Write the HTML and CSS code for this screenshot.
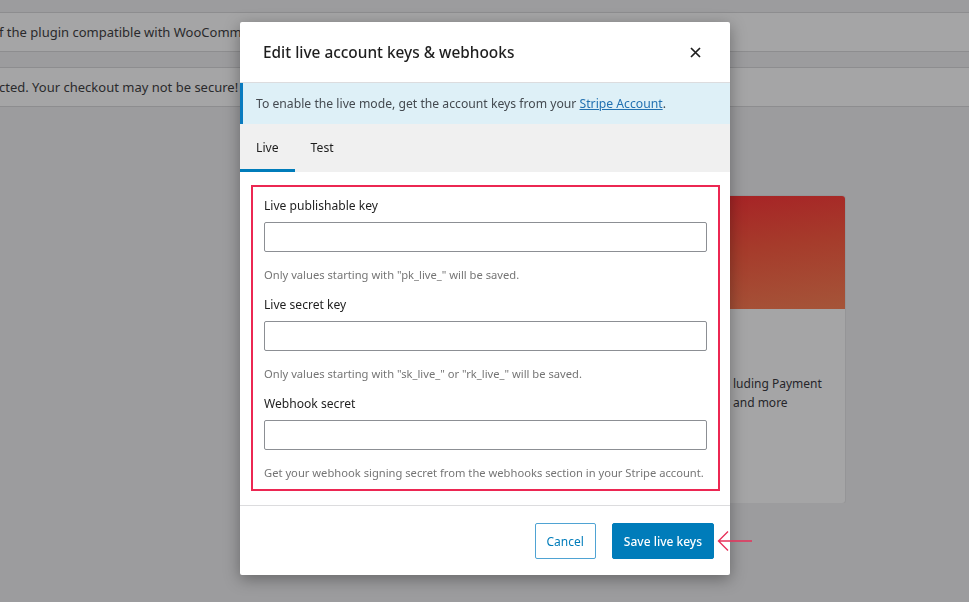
FILE: index.html
```html
<!DOCTYPE html>
<html lang="en">
  <head>
    <meta charset="UTF-8" />
    <meta name="viewport" content="width=device-width, initial-scale=1.0" />
    <title>Stripe settings</title>
    <link rel="stylesheet" href="styles.css">
  </head>
  <body>
    <!-- admin page behind the overlay -->
    <div class="page">
      <div class="notice">f the plugin compatible with WooCommerce to keep your store running smoothly.</div>
      <div class="notice">cted. Your checkout may not be secure! Please enable SSL to accept payments.</div>

      <div class="cards">
        <div class="card">
          <div class="card-image"></div>
          <div class="card-body">
            <p>luding Payment<br />and more</p>
          </div>
        </div>
      </div>
    </div>

    <!-- modal -->
    <div class="modal">
      <div class="modal-header">
        <h1>Edit live account keys &amp; webhooks</h1>
        <button class="close" aria-label="Close">
          <svg width="11" height="11" viewBox="0 0 11 11">
            <path d="M1 1L10 10M10 1L1 10" stroke="#1e1e1e" stroke-width="1.7" fill="none" />
          </svg>
        </button>
      </div>

      <div class="info">
        To enable the live mode, get the account keys from your <a href="#">Stripe Account</a>.
      </div>

      <div class="tabs">
        <div class="tab active">Live</div>
        <div class="tab">Test</div>
      </div>

      <div class="modal-content">
        <div class="fields">
          <div class="field">
            <label for="pubKey">Live publishable key</label>
            <input type="text" id="pubKey" />
            <p class="help">Only values starting with "pk_live_" will be saved.</p>
          </div>
          <div class="field">
            <label for="secretKey">Live secret key</label>
            <input type="text" id="secretKey" />
            <p class="help">Only values starting with "sk_live_" or "rk_live_" will be saved.</p>
          </div>
          <div class="field">
            <label for="webhookSecret">Webhook secret</label>
            <input type="text" id="webhookSecret" />
            <p class="help">Get your webhook signing secret from the webhooks section in your Stripe account.</p>
          </div>
        </div>
      </div>

      <div class="modal-footer">
        <button class="btn secondary">Cancel</button>
        <button class="btn primary">Save live keys</button>
      </div>
    </div>

    <!-- annotation arrow -->
    <svg class="arrow" width="36" height="22" viewBox="0 0 36 22">
      <path d="M35 11H2M11 1.5L1.5 11L11 20.5" stroke="#e8315a" stroke-width="1.4" fill="none" />
    </svg>
  </body>
</html>
```

FILE: styles.css
```css
body {
  margin: 0;
  font-family: "Noto Sans", "Open Sans", sans-serif;
  background-color: #9c9c9e;
  color: #1e1e1e;
  overflow: hidden;
}

.page {
  padding-top: 12px;
}

.notice {
  height: 38px;
  line-height: 38px;
  background: #a5a5a6;
  border-top: 1px solid #8d8d8f;
  border-bottom: 1px solid #8d8d8f;
  margin-bottom: 15px;
  font-size: 13px;
  color: #2a2a2c;
  white-space: nowrap;
  text-indent: -1px;
}

.cards {
  margin-top: 89px;
  padding-left: 600px;
}

.card {
  width: 245px;
  height: 307px;
  background: #a5a5a6;
  border-radius: 3px;
  overflow: hidden;
  box-shadow: 0 0 0 1px rgba(0, 0, 0, 0.04);
}

.card-image {
  height: 113px;
  background: linear-gradient(172deg, #a71c24 0%, #a63b2b 50%, #a55539 100%);
}

.card-body {
  padding: 65px 0 0 133px;
}

.card-body p {
  margin: 0;
  font-size: 12px;
  line-height: 19px;
  color: #26262a;
  white-space: nowrap;
}

/* modal */

.modal {
  position: fixed;
  top: 22px;
  left: 240px;
  width: 490px;
  background: #fff;
  border-radius: 2px;
  box-shadow: 0 4px 16px rgba(0, 0, 0, 0.35);
}

.modal-header {
  height: 60px;
  display: flex;
  align-items: center;
  justify-content: space-between;
  padding: 0 29px 0 23px;
  border-bottom: 1px solid #dcdcde;
}

.modal-header h1 {
  margin: 0;
  font-size: 15.4px;
  font-weight: 500;
  color: #1e1e1e;
}

.close {
  border: none;
  background: none;
  padding: 0;
  margin: 0;
  width: 11px;
  height: 11px;
  display: flex;
  cursor: pointer;
}

.info {
  height: 41px;
  box-sizing: border-box;
  background: #def0f7;
  border-left: 3px solid #0a7bbf;
  padding-left: 13px;
  line-height: 41px;
  font-size: 12.2px;
  color: #444a50;
}

.info a {
  color: #2271b1;
}

.tabs {
  display: flex;
  height: 48px;
  background: #f0f0f0;
}

.tab {
  padding: 0 16px;
  line-height: 48px;
  font-size: 12.2px;
  color: #1e1e1e;
  box-sizing: border-box;
}

.tab.active {
  border-bottom: 3px solid #007cba;
}

.modal-content {
  padding: 13px 10px 14px 11px;
  border-bottom: 1px solid #dcdcde;
}

.fields {
  border: 2px solid #ec2752;
  padding: 10px 11px 8px 11px;
}

.field label {
  display: block;
  font-size: 12.1px;
  line-height: 18px;
  margin-bottom: 7px;
  color: #1e1e1e;
}

.field input {
  display: block;
  width: 100%;
  box-sizing: border-box;
  height: 30px;
  border: 1px solid #8c8f94;
  border-radius: 2px;
  font-size: 13px;
}

.help {
  margin: 15px 0 13px 0;
  font-size: 11.2px;
  line-height: 16px;
  color: #757575;
  white-space: nowrap;
}

.field:last-child .help {
  margin-bottom: 0;
}

.modal-footer {
  display: flex;
  justify-content: flex-end;
  gap: 16px;
  padding: 17px 16px 16px 0;
}

.btn {
  height: 36px;
  padding: 0 11px;
  font-family: inherit;
  font-size: 12px;
  border-radius: 2px;
  cursor: pointer;
}

.btn.secondary {
  background: #fff;
  color: #007cba;
  border: 1px solid #4fa3d3;
}

.btn.primary {
  background: #007cba;
  color: #fff;
  border: 1px solid #007cba;
  font-weight: 500;
}

.arrow {
  position: absolute;
  left: 717px;
  top: 530px;
}
```
